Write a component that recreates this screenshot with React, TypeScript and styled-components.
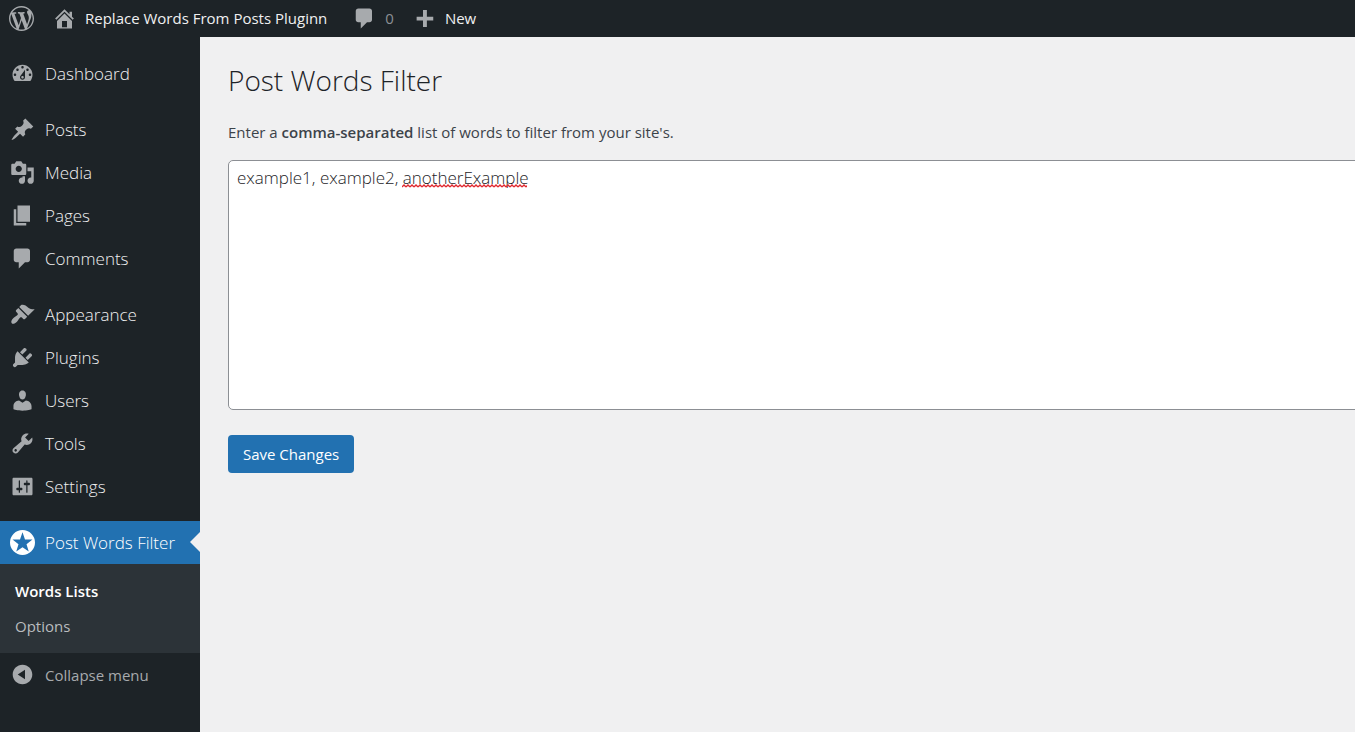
import React from "react";
import styled, { createGlobalStyle, css } from "styled-components";

const GlobalStyle = createGlobalStyle`
  *, *::before, *::after { box-sizing: border-box; }
  body {
    margin: 0;
    background: #f0f0f1;
    color: #3c434a;
    font-family: "Open Sans", "Noto Sans", sans-serif;
    font-size: 15px;
  }
  a { color: inherit; text-decoration: none; }
  ul { list-style: none; margin: 0; padding: 0; }
`;

const icons = {
  wordpress:
    "M20 10c0-5.51-4.49-10-10-10C4.48 0 0 4.49 0 10c0 5.52 4.48 10 10 10 5.51 0 10-4.48 10-10zM7.78 15.37L4.37 6.22c.55-.02 1.17-.08 1.17-.08.5-.06.44-1.13-.06-1.11 0 0-1.45.11-2.37.11-.18 0-.37 0-.58-.01C4.12 2.69 6.87 1.11 10 1.11c2.33 0 4.45.87 6.05 2.34-.68-.11-1.65.39-1.65 1.58 0 .74.45 1.36.9 2.1.35.61.55 1.36.55 2.46 0 1.49-1.4 5-1.4 5l-3.03-8.37c.54-.02.82-.17.82-.17.5-.05.44-1.25-.06-1.22 0 0-1.44.12-2.38.12-.87 0-2.33-.12-2.33-.12-.5-.03-.56 1.2-.06 1.22l.92.08 1.26 3.41zM17.41 10c.24-.64.74-1.87.43-4.25.7 1.29 1.05 2.71 1.05 4.25 0 3.29-1.73 6.24-4.4 7.78.97-2.59 1.94-5.2 2.92-7.78zM6.1 18.09C3.12 16.65 1.11 13.53 1.11 10c0-1.3.23-2.48.72-3.59C3.25 10.3 4.67 14.2 6.1 18.09zm4.03-6.63l2.58 6.98c-.86.29-1.76.45-2.71.45-.79 0-1.57-.11-2.29-.33.81-2.38 1.62-4.74 2.42-7.1z",
  home: "M16 8.5l1.53 1.53-1.06 1.06L10 4.6l-6.47 6.49-1.06-1.06L10 2.5l4 4v-2h2v4zm-6-2.46l6 5.99V18H4v-5.97zM12 17v-5H8v5h4z",
  plus: "M17 8.5v3h-5.1v5.3h-3.1v-5.3H3.7v-3h5.1V3.2h3.1v5.3z",
  dashboard:
    "M3.76 16h12.48c1.1-1.37 1.76-3.11 1.76-5 0-4.42-3.58-8-8-8s-8 3.58-8 8c0 1.89.66 3.63 1.76 5zM10 4c.55 0 1 .45 1 1s-.45 1-1 1-1-.45-1-1 .45-1 1-1zM6 6c.55 0 1 .45 1 1s-.45 1-1 1-1-.45-1-1 .45-1 1-1zm8 0c.55 0 1 .45 1 1s-.45 1-1 1-1-.45-1-1 .45-1 1-1zm-5.37 5.55L12 7v6c0 1.1-.9 2-2 2s-2-.9-2-2c0-.57.24-1.08.63-1.45zM4 10c.55 0 1 .45 1 1s-.45 1-1 1-1-.45-1-1 .45-1 1-1zm12 0c.55 0 1 .45 1 1s-.45 1-1 1-1-.45-1-1 .45-1 1-1zm-5 3c0-.55-.45-1-1-1s-1 .45-1 1 .45 1 1 1 1-.45 1-1z",
  post: "M10.44 3.02l1.82-1.82 6.36 6.35-1.83 1.82c-1.05-.68-2.48-.57-3.41.36l-.75.75c-.92.93-1.04 2.35-.35 3.41l-1.83 1.82-2.41-2.41-2.8 2.79c-.42.42-3.38 2.71-3.8 2.29s1.86-3.39 2.28-3.81l2.79-2.79L4.1 9.36l1.83-1.82c1.05.69 2.48.57 3.4-.36l.75-.75c.93-.92 1.05-2.35.36-3.41z",
  media:
    "M13 11V4c0-.55-.45-1-1-1h-1.67L9 1H5L3.67 3H2c-.55 0-1 .45-1 1v7c0 .55.45 1 1 1h10c.55 0 1-.45 1-1zM7 4.5c1.38 0 2.5 1.12 2.5 2.5S8.38 9.5 7 9.5 4.5 8.38 4.5 7 5.62 4.5 7 4.5zM14 6h5v10.5c0 1.38-1.12 2.5-2.5 2.5S14 17.88 14 16.5s1.12-2.5 2.5-2.5c.17 0 .34.02.5.05V9h-3V6zm-4 8.05V13h2v3.5c0 1.38-1.12 2.5-2.5 2.5S7 17.88 7 16.5 8.12 14 9.5 14c.17 0 .34.02.5.05z",
  page: "M6 15V2h10v13H6zm-1 1h8v2H3V5h2v11z",
  comments:
    "M5 2h9q.82 0 1.41.59T16 4v7q0 .82-.59 1.41T14 13h-2l-5 5v-5H5q-.82 0-1.41-.59T3 11V4q0-.82.59-1.41T5 2z",
  appearance:
    "M14.48 11.06L7.41 3.99l1.5-1.5c.5-.56 2.3-.47 3.51.32 1.21.8 1.43 1.28 2.91 2.1 1.18.64 2.45 1.26 4.45.85zm-.71.71L6.7 4.7 4.93 6.47c-.39.39-.39 1.02 0 1.41l1.06 1.06c.39.39.39 1.03 0 1.42-.6.6-1.43 1.11-2.21 1.69-.35.26-.7.53-1.01.84C1.43 14.23.4 16.08 1.4 17.07c.99 1 2.84-.03 4.18-1.36.31-.31.58-.66.85-1.02.57-.78 1.08-1.61 1.69-2.21.39-.39 1.02-.39 1.41 0l1.06 1.06c.39.39 1.02.39 1.41 0z",
  plugins:
    "M13.11 4.36L9.87 7.6 8 5.73l3.24-3.24c.35-.34 1.05-.2 1.56.32.52.51.66 1.21.31 1.55zm-8 1.77l.91-1.12 9.01 9.01-1.19.84c-.71.71-2.63 1.16-3.82 1.16H6.14L4.9 17.26c-.59.59-1.54.59-2.12 0-.59-.58-.59-1.53 0-2.12l1.24-1.24v-3.88c0-1.13.4-3.19 1.09-3.89zm7.26 3.97l3.24-3.24c.34-.35 1.04-.21 1.55.31.52.51.66 1.21.31 1.55l-3.24 3.25z",
  users:
    "M10 9.25c-2.27 0-2.73-3.44-2.73-3.44C7 4.02 7.82 2 9.97 2c2.16 0 2.98 2.02 2.71 3.81 0 0-.41 3.44-2.68 3.44zm0 2.57L12.72 10c2.39 0 4.52 2.33 4.52 4.53v2.49s-3.65 1.13-7.24 1.13c-3.65 0-7.24-1.13-7.24-1.13v-2.49c0-2.25 1.94-4.48 4.47-4.48z",
  tools:
    "M16.68 9.77c-1.34 1.34-3.3 1.67-4.95.99l-5.41 6.52c-.99.99-2.59.99-3.58 0s-.99-2.59 0-3.57l6.52-5.42c-.68-1.65-.35-3.61.99-4.95 1.28-1.28 3.12-1.62 4.72-1.06l-2.89 2.89 2.82 2.82 2.86-2.87c.53 1.58.18 3.39-1.08 4.65zM3.81 16.21c.4.39 1.04.39 1.43 0 .4-.4.4-1.04 0-1.43-.39-.4-1.03-.4-1.43 0-.39.39-.39 1.03 0 1.43z",
  settings:
    "M18 16V4c0-.55-.45-1-1-1H3c-.55 0-1 .45-1 1v12c0 .55.45 1 1 1h14c.55 0 1-.45 1-1zM8 11h1c.55 0 1 .45 1 1s-.45 1-1 1H8v1.5c0 .28-.22.5-.5.5s-.5-.22-.5-.5V13H6c-.55 0-1-.45-1-1s.45-1 1-1h1V5.5c0-.28.22-.5.5-.5s.5.22.5.5V11zm5-2h-1c-.55 0-1-.45-1-1s.45-1 1-1h1V5.5c0-.28.22-.5.5-.5s.5.22.5.5V7h1c.55 0 1 .45 1 1s-.45 1-1 1h-1v5.5c0 .28-.22.5-.5.5s-.5-.22-.5-.5V9z",
  star: "M10 0a10 10 0 1 0 0 20a10 10 0 1 0 0-20zM10 1.8L12 7.5L18 7.6L13.2 11.3L15 17.2L10 13.7L5 17.2L6.8 11.3L2 7.6L8 7.5z",
  collapse:
    "M10 2.16c4.33 0 7.84 3.51 7.84 7.84s-3.51 7.84-7.84 7.84S2.16 14.33 2.16 10 5.71 2.16 10 2.16zm2 11.72V6.12L6.18 9.97z",
};

type IconName = keyof typeof icons;

const Glyph = styled.svg`
  flex: none;
  width: 25px;
  height: 25px;
  fill: currentColor;
  fill-rule: evenodd;
`;

const Icon = ({ name }: { name: IconName }) => (
  <Glyph viewBox="0 0 20 20" aria-hidden="true">
    <path d={icons[name]} />
  </Glyph>
);

const Page = styled.div`
  min-height: 100vh;
  display: flex;
  flex-direction: column;
  overflow: hidden;
`;

const AdminBar = styled.nav`
  display: flex;
  align-items: center;
  gap: 18px;
  height: 37px;
  padding: 0 9px;
  background: #1d2327;
  color: #f0f0f1;
`;

const BarLink = styled.a<{ $dim?: boolean }>`
  display: flex;
  align-items: center;
  gap: 8px;
  line-height: 37px;
  white-space: nowrap;
  color: ${(p) => (p.$dim ? "#8b9095" : "#f0f0f1")};
  ${Glyph} { color: #a7aaad; }
`;

const SiteLink = styled(BarLink)`
  padding-right: 7px;
`;

const Body = styled.div`
  flex: 1;
  display: flex;
`;

const Sidebar = styled.nav`
  flex: none;
  width: 200px;
  padding-top: 15px;
  background: #1d2327;
`;

const MenuGroup = styled.ul`
  margin-bottom: 13px;
`;

const menuRow = css`
  display: flex;
  align-items: center;
  gap: 10px;
  width: 100%;
  height: 43px;
  padding: 0 10px;
  white-space: nowrap;
`;

const MenuLink = styled.a<{ $current?: boolean }>`
  ${menuRow}
  position: relative;
  font-size: 17px;
  font-weight: 350;
  color: ${(p) => (p.$current ? "#fff" : "#f0f0f1")};
  background: ${(p) => (p.$current ? "#2271b1" : "transparent")};
  ${Glyph} { color: ${(p) => (p.$current ? "#fff" : "#a7aaad")}; }
  ${(p) =>
    p.$current &&
    css`
      &::after {
        content: "";
        position: absolute;
        right: 0;
        top: 11px;
        border: 10px solid transparent;
        border-left-width: 0;
        border-right-color: #f0f0f1;
      }
    `}
`;

const Submenu = styled.ul`
  padding: 10px 0 9px;
  background: #2c3338;
`;

const SubLink = styled.a<{ $current?: boolean }>`
  display: block;
  padding: 0 15px;
  line-height: 35px;
  color: ${(p) => (p.$current ? "#fff" : "#b9bcbf")};
  font-weight: ${(p) => (p.$current ? 600 : 400)};
`;

const CollapseButton = styled.button`
  ${menuRow}
  border: 0;
  background: none;
  font: inherit;
  color: #a7aaad;
`;

const Content = styled.main`
  flex: 1;
  min-width: 0;
  padding: 25px 0 0 28px;
`;

const Title = styled.h1`
  margin: 0;
  font-size: 28px;
  font-weight: 330;
  line-height: 36px;
  color: #1d2327;
`;

const Description = styled.label`
  display: block;
  margin: 22px 0 16px;
  line-height: 24px;
  strong { font-weight: 600; }
`;

const Field = styled.div`
  position: relative;
  display: flex;
  margin: 0 -20px 25px 0;
`;

const WordsBox = styled.textarea`
  flex: 1;
  height: 250px;
  padding: 3px 8px;
  border: 1px solid #8c8f94;
  border-radius: 5px;
  background: #fff;
  color: #1d2327;
  font: inherit;
  font-size: 17px;
  font-weight: 300;
  line-height: 28px;
  resize: none;
  outline: 0;
`;

const SpellingMark = styled.svg`
  position: absolute;
  left: 174px;
  top: 24px;
  width: 125px;
  height: 4px;
  pointer-events: none;
`;

const SaveButton = styled.button`
  height: 38px;
  padding: 0 15px;
  border: 0;
  border-radius: 4px;
  background: #2271b1;
  color: #fff;
  font: inherit;
`;

const menu: { label: string; icon: IconName }[][] = [
  [{ label: "Dashboard", icon: "dashboard" }],
  [
    { label: "Posts", icon: "post" },
    { label: "Media", icon: "media" },
    { label: "Pages", icon: "page" },
    { label: "Comments", icon: "comments" },
  ],
  [
    { label: "Appearance", icon: "appearance" },
    { label: "Plugins", icon: "plugins" },
    { label: "Users", icon: "users" },
    { label: "Tools", icon: "tools" },
    { label: "Settings", icon: "settings" },
  ],
];

export default function App() {
  return (
    <Page>
      <GlobalStyle />
      <AdminBar aria-label="Toolbar">
        <BarLink href="#" aria-label="About WordPress">
          <Icon name="wordpress" />
        </BarLink>
        <SiteLink href="#">
          <Icon name="home" />
          Replace Words From Posts Pluginn
        </SiteLink>
        <BarLink href="#" $dim>
          <Icon name="comments" />0
        </BarLink>
        <BarLink href="#">
          <Icon name="plus" />
          New
        </BarLink>
      </AdminBar>
      <Body>
        <Sidebar aria-label="Main menu">
          {menu.map((group) => (
            <MenuGroup key={group[0].label}>
              {group.map((item) => (
                <li key={item.label}>
                  <MenuLink href="#">
                    <Icon name={item.icon} />
                    {item.label}
                  </MenuLink>
                </li>
              ))}
            </MenuGroup>
          ))}
          <MenuLink href="#" $current aria-current="page">
            <Icon name="star" />
            Post Words Filter
          </MenuLink>
          <Submenu>
            <li>
              <SubLink href="#" $current>Words Lists</SubLink>
            </li>
            <li>
              <SubLink href="#">Options</SubLink>
            </li>
          </Submenu>
          <CollapseButton type="button">
            <Icon name="collapse" />
            Collapse menu
          </CollapseButton>
        </Sidebar>
        <Content>
          <Title>Post Words Filter</Title>
          <Description htmlFor="words">
            Enter a <strong>comma-separated</strong> list of words to filter from your site's.
          </Description>
          <Field>
            <WordsBox id="words" spellCheck={false} defaultValue="example1, example2, anotherExample" />
            <SpellingMark aria-hidden="true">
              <defs>
                <pattern id="wave" width="4" height="4" patternUnits="userSpaceOnUse">
                  <path d="M0 3L2 1L4 3" fill="none" stroke="#e0282e" strokeWidth="1.3" />
                </pattern>
              </defs>
              <rect width="100%" height="4" fill="url(#wave)" />
            </SpellingMark>
          </Field>
          <SaveButton type="button">Save Changes</SaveButton>
        </Content>
      </Body>
    </Page>
  );
}
